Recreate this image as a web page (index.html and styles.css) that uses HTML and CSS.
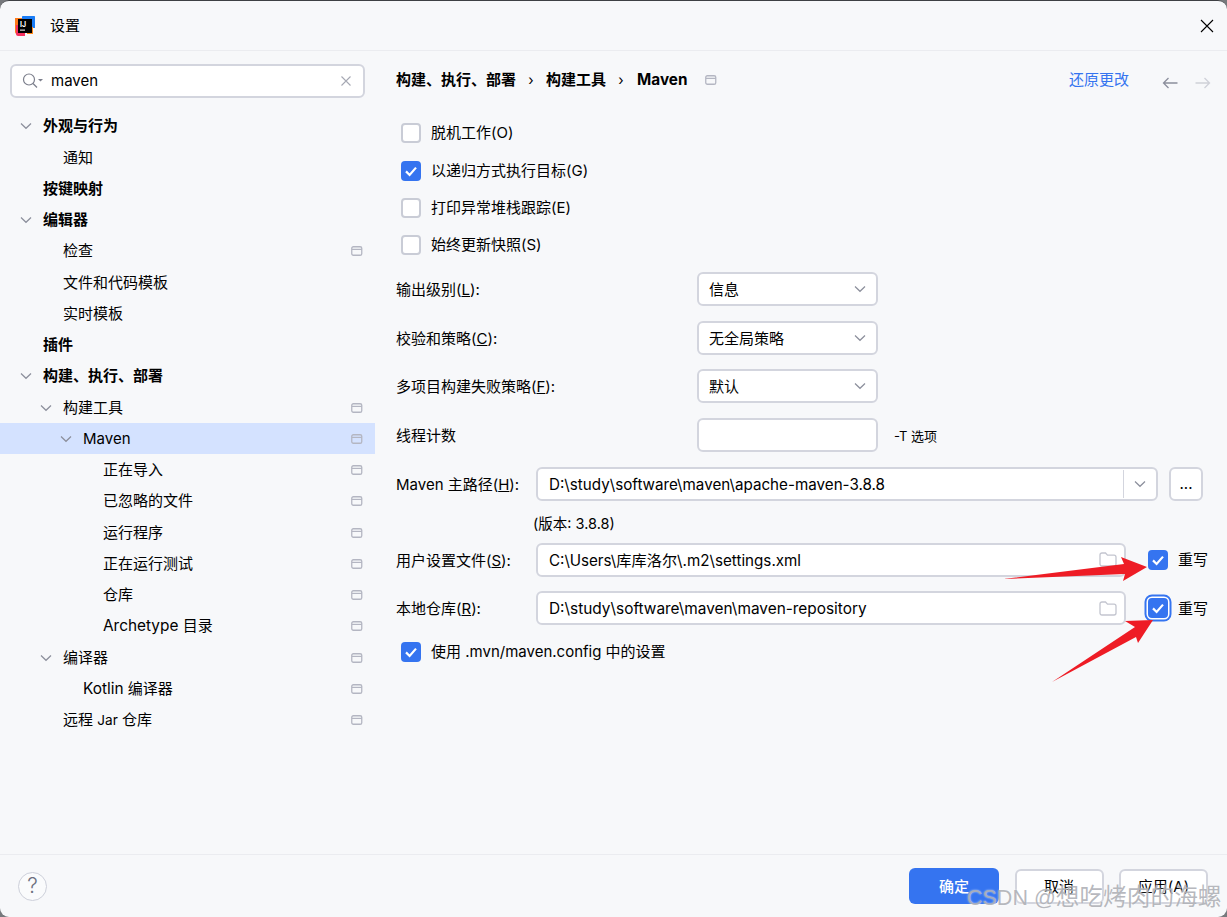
FILE: index.html

```html
<!DOCTYPE html>
<html>
<head>
  <meta charset="UTF-8">
  <title>设置</title>
  <link rel="stylesheet" href="styles.css">
</head>
<body>
  <svg class="defs" width="0" height="0">
    <symbol id="scope" viewBox="0 0 12 10"><rect x="0.75" y="0.75" width="10" height="8.5" rx="1.6" fill="none" stroke="#b4b6c2" stroke-width="1.3"/><path d="M1 3.4H11" stroke="#b4b6c2" stroke-width="1.2"/></symbol>
    <symbol id="chev" viewBox="0 0 12 8"><path d="M1 1.5L6 6.3L11 1.5" fill="none" stroke="#8c8f9c" stroke-width="1.2"/></symbol>
    <symbol id="folder" viewBox="0 0 18 15"><path d="M1 3C1 1.8 1.8 1 3 1H6.5L8.5 3.2H15C16.2 3.2 17 4 17 5.2V12C17 13.2 16.2 14 15 14H3C1.8 14 1 13.2 1 12Z" fill="none" stroke="#c3c5cf" stroke-width="1.3"/></symbol>
    <symbol id="tick" viewBox="0 0 20 20"><path d="M5 10.4L8.6 14L15 6.6" fill="none" stroke="#fff" stroke-width="2.2"/></symbol>
  </svg>

  <div class="window">
    <header class="titlebar">
      <svg class="logo" width="20" height="20" viewBox="0 0 20 20">
        <path d="M0 2H9V18H2C1 18 0 17 0 16Z" fill="#ff7a1a"/>
        <path d="M7 1C7 .4 7.4 0 8 0H19C19.6 0 20 .4 20 1V12H7Z" fill="#1a7cf5"/>
        <path d="M1 9H10V20H3C2 20 1 19 1 18Z" fill="#f5305f"/>
        <path d="M12 11H18V18H12Z" fill="#ff8a1a"/>
        <rect x="3" y="3" width="14" height="14" fill="#000"/>
        <text x="5" y="10.5" class="logo-text">IJ</text>
        <rect x="5" y="13.6" width="5" height="1" fill="#fff"/>
      </svg>
      <span class="title">设置</span>
      <svg class="close" width="14" height="14" viewBox="0 0 14 14"><path d="M1 1L13 13M13 1L1 13" stroke="#000" stroke-width="1.1"/></svg>
    </header>

    <div class="main">
      <aside class="sidebar">
        <div class="search">
          <svg width="24" height="16" viewBox="0 0 24 16"><circle cx="7" cy="6.5" r="5.5" fill="none" stroke="#7c7f8c" stroke-width="1.2"/><path d="M11 10.5L15 14.5" stroke="#7c7f8c" stroke-width="1.3"/><path d="M16 6H21L18.5 8.5Z" fill="#7c7f8c"/></svg>
          <span class="search-text">maven</span>
          <svg class="search-clear" width="10" height="10" viewBox="0 0 10 10"><path d="M.5 .5L9.5 9.5M9.5 .5L.5 9.5" stroke="#a6a8b3" stroke-width="1.1"/></svg>
        </div>
        <ul class="tree">
          <li class="row l0 strong"><svg class="twist"><use href="#chev" width="12" height="8"/></svg>外观与行为</li>
          <li class="row l1"><i class="twist"></i>通知</li>
          <li class="row l0 strong"><i class="twist"></i>按键映射</li>
          <li class="row l0 strong"><svg class="twist"><use href="#chev" width="12" height="8"/></svg>编辑器</li>
          <li class="row l1"><i class="twist"></i>检查<svg class="scope"><use href="#scope"/></svg></li>
          <li class="row l1"><i class="twist"></i>文件和代码模板</li>
          <li class="row l1"><i class="twist"></i>实时模板</li>
          <li class="row l0 strong"><i class="twist"></i>插件</li>
          <li class="row l0 strong"><svg class="twist"><use href="#chev" width="12" height="8"/></svg>构建、执行、部署</li>
          <li class="row l1"><svg class="twist"><use href="#chev" width="12" height="8"/></svg>构建工具<svg class="scope"><use href="#scope"/></svg></li>
          <li class="row l2 selected"><svg class="twist"><use href="#chev" width="12" height="8"/></svg>Maven<svg class="scope"><use href="#scope"/></svg></li>
          <li class="row l3"><i class="twist"></i>正在导入<svg class="scope"><use href="#scope"/></svg></li>
          <li class="row l3"><i class="twist"></i>已忽略的文件<svg class="scope"><use href="#scope"/></svg></li>
          <li class="row l3"><i class="twist"></i>运行程序<svg class="scope"><use href="#scope"/></svg></li>
          <li class="row l3"><i class="twist"></i>正在运行测试<svg class="scope"><use href="#scope"/></svg></li>
          <li class="row l3"><i class="twist"></i>仓库<svg class="scope"><use href="#scope"/></svg></li>
          <li class="row l3"><i class="twist"></i><span class="wider">Archetype</span>&nbsp;目录<svg class="scope"><use href="#scope"/></svg></li>
          <li class="row l1"><svg class="twist"><use href="#chev" width="12" height="8"/></svg>编译器<svg class="scope"><use href="#scope"/></svg></li>
          <li class="row l2"><i class="twist"></i><span class="wider">Kotlin</span>&nbsp;编译器<svg class="scope"><use href="#scope"/></svg></li>
          <li class="row l1"><i class="twist"></i>远程&nbsp;<span class="narrow">Jar</span>&nbsp;仓库<svg class="scope"><use href="#scope"/></svg></li>
        </ul>
      </aside>

      <section class="content">
        <div class="crumbs">
          <b>构建、执行、部署</b>
          <span class="sep">›</span>
          <b>构建工具</b>
          <span class="sep">›</span>
          <b class="crumb-last">Maven</b>
          <svg class="scope crumb-scope"><use href="#scope"/></svg>
          <a class="revert">还原更改</a>
          <svg class="nav" width="16" height="12" viewBox="0 0 16 12"><path d="M15.5 6H1.5M6.5 1L1.5 6L6.5 11" fill="none" stroke="#8c8f9c" stroke-width="1.3"/></svg>
          <svg class="nav nav-next" width="16" height="12" viewBox="0 0 16 12"><path d="M.5 6H14.5M9.5 1L14.5 6L9.5 11" fill="none" stroke="#cfd1d8" stroke-width="1.3"/></svg>
        </div>

        <div class="options">
          <label class="opt"><span class="box"></span><span>脱机工作(O)</span></label>
          <label class="opt"><span class="box on"><svg><use href="#tick"/></svg></span><span>以递归方式执行目标(G)</span></label>
          <label class="opt"><span class="box"></span><span>打印异常堆栈跟踪(E)</span></label>
          <label class="opt"><span class="box"></span><span>始终更新快照(S)</span></label>
        </div>

        <div class="form">
          <div class="field">
            <span class="label wide">输出级别(<u>L</u>):</span>
            <div class="input combo">信息<svg class="chev"><use href="#chev"/></svg></div>
          </div>
          <div class="field">
            <span class="label wide">校验和策略(<u>C</u>):</span>
            <div class="input combo">无全局策略<svg class="chev"><use href="#chev"/></svg></div>
          </div>
          <div class="field">
            <span class="label wide">多项目构建失败策略(<u>F</u>):</span>
            <div class="input combo">默认<svg class="chev"><use href="#chev"/></svg></div>
          </div>
          <div class="field">
            <span class="label wide">线程计数</span>
            <div class="input combo"></div>
            <span class="hint">-T 选项</span>
          </div>
          <div class="field">
            <span class="label">Maven 主路径(<u>H</u>):</span>
            <div class="input path">D:\study\software\maven\apache-maven-3.8.8<span class="drop"><svg class="chev"><use href="#chev"/></svg></span></div>
            <div class="input more">...</div>
          </div>
        </div>

        <div class="version">(版本: 3.8.8)</div>

        <div class="form tight">
          <div class="field">
            <span class="label">用户设置文件(<u>S</u>):</span>
            <div class="input path">C:\Users\库库洛尔\.m2\settings.xml<svg class="folder"><use href="#folder"/></svg></div>
            <span class="box on over"><svg><use href="#tick"/></svg></span>
            <span class="over-text">重写</span>
          </div>
          <div class="field">
            <span class="label">本地仓库(<u>R</u>):</span>
            <div class="input path repo">D:\study\software\maven\maven-repository<svg class="folder"><use href="#folder"/></svg></div>
            <span class="box on over focus"><svg><use href="#tick"/></svg></span>
            <span class="over-text">重写</span>
          </div>
        </div>

        <label class="opt last"><span class="box on"><svg><use href="#tick"/></svg></span><span>使用 .mvn/maven.config 中的设置</span></label>
      </section>
    </div>

    <footer class="footer">
      <div class="help">?</div>
      <button class="btn primary">确定</button>
      <button class="btn">取消</button>
      <button class="btn">应用(A)</button>
    </footer>

    <svg class="arrows" width="1227" height="917" viewBox="0 0 1227 917">
      <polygon points="1003,579 1124,564 1121,557 1147,567 1123,581 1125,574" fill="#ee1c25"/>
      <polygon points="1052,682 1135,627 1125,621 1153,620 1138,643 1136,637" fill="#ee1c25"/>
    </svg>
    <div class="watermark"><span class="wm-latin">CSDN @</span>想吃烤肉的海螺</div>
  </div>
</body>
</html>
```

FILE: styles.css

```css
* { box-sizing: border-box; }
html, body { margin: 0; height: 100%; background: #77797d; }
body { font-family: "Inter", "Noto Sans CJK SC", sans-serif; font-size: 15px; line-height: 20px; color: #000; overflow: hidden; }
.defs { position: absolute; }

.window { position: relative; height: 917px; display: flex; flex-direction: column; background: #f7f8fa; border-top: 1px solid #3e4044; border-radius: 9px; overflow: hidden; }

.titlebar { height: 50px; flex: none; display: flex; align-items: center; padding: 0 13px 0 15px; border-bottom: 1px solid #ebecf0; }
.logo { margin-right: 15px; }
.logo-text { font-size: 7px; font-weight: 700; fill: #fff; }
.title { flex: 1; }

.main { flex: 1; display: flex; min-height: 0; }

.sidebar { width: 375px; flex: none; }
.search { height: 34px; margin: 13px 10px 12px; display: flex; align-items: center; padding: 0 13px 0 10px; background: #fff; border: 2px solid #d3d5de; border-radius: 6px; }
.search-text { margin-left: 5px; flex: 1; }
.search-clear { margin-right: -1px; }

.tree { list-style: none; margin: 0; padding: 0; }
.row { height: 31.25px; display: flex; align-items: center; padding-top: 1.5px; }
.strong { font-weight: 700; }
.selected { background: #d4e2ff; }
.l0 { padding-left: 20px; }
.l1 { padding-left: 40px; }
.l2 { padding-left: 60px; }
.l3 { padding-left: 80px; }
.twist { width: 23px; height: 8px; flex: none; display: block; }
.scope { width: 12px; height: 10px; margin-left: auto; margin-right: 12px; }
.wider { font-size: 15.4px; }
.narrow { font-size: 13.6px; }

.content { flex: 1; min-width: 0; padding-left: 21px; padding-right: 19px; }

.crumbs { height: 56px; display: flex; align-items: center; padding-top: 1.5px; }
.crumbs b { font-weight: 700; }
.sep { width: 30px; text-align: center; font-size: 14px; }
.crumb-last { font-size: 15.3px; margin-left: 1px; }
.crumb-scope { margin-left: 18px; margin-right: 0; }
.revert { margin-left: auto; color: #3574f0; }
.nav { margin-left: 33px; margin-top: 6px; }
.nav-next { margin-left: 17px; margin-right: -3px; }

.options { padding-top: 7.5px; padding-left: 5px; }
.opt { height: 37.4px; display: flex; align-items: center; }
.box { width: 20px; height: 20px; flex: none; display: block; margin-right: 10px; background: #fff; border: 2px solid #c9ccd6; border-radius: 4px; }
.box.on { background: #3574f0; border: 0; }
.box svg { width: 20px; height: 20px; display: block; }

.form { display: flex; flex-direction: column; gap: 14.7px; margin-top: 7.9px; }
.form.tight { margin-top: 0; }
.field { height: 34px; display: flex; align-items: center; }
.label { width: 140px; flex: none; padding-top: 2px; }
.label.wide { width: 301px; }
.input { height: 100%; display: flex; align-items: center; background: #fff; border: 2px solid #d3d5de; border-radius: 6px; padding: 2px 0 0 11px; }
.combo { width: 181px; margin-right: -1px; padding-left: 10px; }
.chev { width: 12px; height: 8px; margin-top: -2px; }
.combo .chev { margin-left: auto; margin-right: 10px; }
.hint { margin-left: 17px; font-size: 13px; padding-top: 2px; }
.path { flex: 1; min-width: 0; font-size: 15.2px; }
.repo { font-size: 15.4px; }
.drop { margin-left: auto; width: 33px; height: 100%; margin-top: -2px; display: flex; align-items: center; justify-content: center; border-left: 1px solid #d3d5de; flex: none; }
.drop .chev { margin-top: 0; }
.more { width: 34px; flex: none; margin-left: 11px; margin-right: 5px; padding: 0; justify-content: center; }
.folder { width: 18px; height: 15px; margin-left: auto; margin-right: 7px; margin-top: -2px; }
.version { height: 42px; padding: 13px 0 0 137px; font-size: 14.5px; }
.over { margin-left: 22px; }
.over-text { flex: none; padding-top: 1px; }
.focus { box-shadow: 0 0 0 1.5px #fff, 0 0 0 3.5px #3574f0; }
.last { height: 20px; margin: 16.5px 0 0 5px; }

.footer { height: 63px; flex: none; display: flex; align-items: center; justify-content: flex-end; gap: 15.5px; padding: 0 19px 0 18px; border-top: 1px solid #ebecf0; }
.help { width: 29px; height: 29px; margin-right: auto; display: flex; align-items: center; justify-content: center; border: 1.5px solid #cdd0da; border-radius: 50%; color: #6c707e; font-size: 21px; font-weight: 300; background: #fafbfc; }
.btn { width: 89px; height: 35px; font: inherit; background: #fff; border: 2px solid #d3d5de; border-radius: 6px; padding: 2px 0 0; color: #000; }
.primary { width: 90px; height: 36px; background: #3574f0; border: 0; color: #fff; font-weight: 500; }

.arrows { position: absolute; left: 0; top: -1px; pointer-events: none; }
.watermark { position: absolute; left: 967px; top: 882px; font-family: "Liberation Sans", "Noto Sans CJK SC", sans-serif; font-size: 23.7px; line-height: 28px; white-space: nowrap; color: rgba(170, 172, 178, 0.85); text-shadow: 0 0 2px rgba(255, 255, 255, 0.7); }
.wm-latin { font-size: 21.5px; }
```
